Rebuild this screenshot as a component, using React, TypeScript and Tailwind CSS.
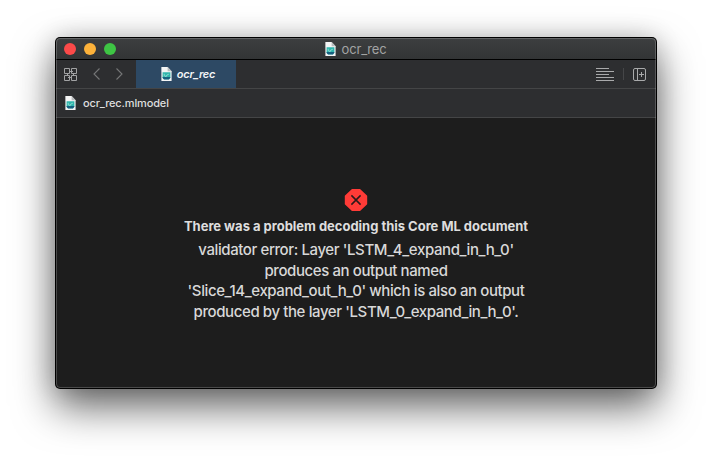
function ModelFileIcon() {
  return (
    <svg className="block h-[14px] w-[11px] shrink-0" viewBox="0 0 11 14">
      <path d="M0.4 0H6.6L10.6 4.2V14H0.4Z" fill="#f4f5f5" />
      <path d="M6.6 0L10.6 4.2H6.6Z" fill="#b9bcbe" />
      <path d="M1.6 5.2H9.4V10L8 12.3H3L1.6 10.5Z" fill="#2fb5ac" />
      <path d="M1.6 10H9.4V10.8L8 12.4H3L1.6 11Z" fill="#15607f" />
      <path d="M3.2 6.8V8.6L5.2 9.6L5.7 8.2L7.8 7.2" fill="none" stroke="#a3e4da" strokeWidth="0.8" />
    </svg>
  );
}

function RelatedItemsIcon() {
  return (
    <svg className="block h-[13px] w-[13px]" viewBox="0 0 13 13" fill="none" stroke="#a2a3a4">
      <path d="M0.5 0.5H5.5V5.5H0.5ZM7.5 0.5H12.5V5.5H7.5ZM0.5 7.5H5.5V12.5H0.5ZM7.5 7.5H12.5V12.5H7.5Z" />
      <path d="M5.5 3.5H9M3.5 5.5V7.5M9.5 5.5V7.5M4 9.5H7.5" />
    </svg>
  );
}

function Chevron({ flipped = false }: { flipped?: boolean }) {
  return (
    <svg className={flipped ? "block h-3 w-[7px] rotate-180" : "block h-3 w-[7px]"} viewBox="0 0 7 12">
      <path d="M6.5 0.5L1 6L6.5 11.5" fill="none" stroke="#747576" strokeWidth="1.1" />
    </svg>
  );
}

function LinesIcon() {
  return (
    <svg className="block h-[13px] w-[18px]" viewBox="0 0 18 13">
      <path d="M0 0.5H13M0 3.5H18M0 6.5H13M0 9.5H18M0 12.5H18" stroke="#a9aaab" />
    </svg>
  );
}

function AddEditorIcon() {
  return (
    <svg className="block h-[13px] w-[13px]" viewBox="0 0 13 13" fill="none" stroke="#a9aaab">
      <rect x="0.5" y="0.5" width="12" height="12" rx="1.5" />
      <path d="M4.5 0.5V12.5M6 6.5H11M8.5 4V9" />
    </svg>
  );
}

function ErrorIcon() {
  return (
    <svg className="block h-[22px] w-6" viewBox="0 0 24 22">
      <path
        d="M8.2 0.8H15.8L22.4 7V15L15.8 21.2H8.2L1.6 15V7Z"
        fill="#ff3b37"
        stroke="#ff3b37"
        strokeWidth="1.6"
        strokeLinejoin="round"
      />
      <path d="M7.4 6.4L16.6 15.6M16.6 6.4L7.4 15.6" stroke="#2b1a1a" strokeWidth="1.5" />
    </svg>
  );
}

export default function App() {
  return (
    <div className="h-[462px] w-[712px] overflow-hidden bg-white pt-[37px] pl-[55px] font-['Inter','Liberation_Sans',sans-serif]">
      <div className="h-[352px] w-[602px] rounded-[5px] bg-black p-px shadow-[0_18px_40px_rgba(0,0,0,0.6),0_0_24px_rgba(0,0,0,0.16)]">
        <div className="relative flex h-[350px] flex-col overflow-hidden rounded-[4px] bg-[#1d1d1d] after:pointer-events-none after:absolute after:inset-0 after:rounded-[4px] after:border after:border-white/20 after:content-['']">
          <header className="flex h-[22px] shrink-0 items-center border-b border-black bg-linear-to-b from-[#3d3f40] to-[#323435] px-2">
            <div className="flex w-[100px] gap-2">
              <span className="size-3 rounded-full bg-[#fc4a49]" />
              <span className="size-3 rounded-full bg-[#fdb23a]" />
              <span className="size-3 rounded-full bg-[#3ec544]" />
            </div>
            <div className="flex flex-1 items-center justify-center gap-[6px] pr-[101px]">
              <ModelFileIcon />
              <span className="text-[13px] leading-[18px] tracking-[-0.2px] whitespace-nowrap text-[#a3a4a4]">ocr_rec</span>
            </div>
          </header>
          <nav className="flex h-[29px] shrink-0 items-center border-b border-[#444546] bg-[#2d2e30] pr-[10px] pl-2">
            <RelatedItemsIcon />
            <div className="ml-4 flex gap-4">
              <Chevron />
              <Chevron flipped />
            </div>
            <div className="ml-[13px] flex h-7 w-[100px] items-center justify-center gap-[5px] bg-[#2d4964] pl-[4px]">
              <ModelFileIcon />
              <span className="text-[11px] font-semibold tracking-[-0.2px] whitespace-nowrap text-[#f3f5f7] italic">ocr_rec</span>
            </div>
            <div className="ml-auto flex items-center">
              <LinesIcon />
              <span className="ml-[9px] h-3 w-px bg-[#454648]" />
              <span className="ml-[9px]">
                <AddEditorIcon />
              </span>
            </div>
          </nav>
          <div className="flex h-[29px] shrink-0 items-center gap-[7px] border-b border-[#444546] bg-[#2d2e30] pl-[9px]">
            <ModelFileIcon />
            <span className="text-[11px] font-medium tracking-[-0.14px] whitespace-nowrap text-[#dededf]">ocr_rec.mlmodel</span>
          </div>
          <main className="flex flex-1 flex-col items-center pt-[71px] whitespace-nowrap text-[#dddddd]">
            <ErrorIcon />
            <h1 className="mt-[6px] text-[13px] leading-[18px] font-bold tracking-[-0.02px]">
              There was a problem decoding this Core ML document
            </h1>
            <p className="mt-[5px] text-center text-[15px] leading-[20.6px] font-medium tracking-[-0.4px] text-[#d8d8d8]">
              validator error: Layer 'LSTM_4_expand_in_h_0'
              <br />
              produces an output named
              <br />
              'Slice_14_expand_out_h_0' which is also an output
              <br />
              produced by the layer 'LSTM_0_expand_in_h_0'.
            </p>
          </main>
        </div>
      </div>
    </div>
  );
}
